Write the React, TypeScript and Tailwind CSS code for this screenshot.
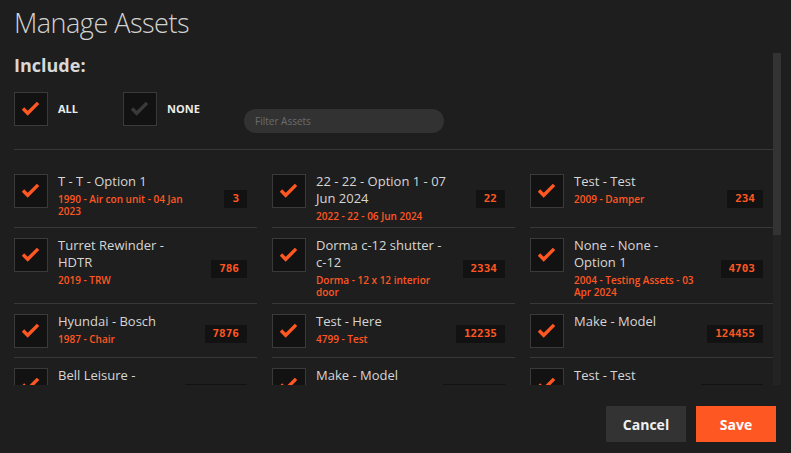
type Asset = {
  title: string;
  detail?: string;
  count: string;
};

const assets: Asset[] = [
  { title: "T - T - Option 1", detail: "1990 - Air con unit - 04 Jan 2023", count: "3" },
  { title: "22 - 22 - Option 1 - 07 Jun 2024", detail: "2022 - 22 - 06 Jun 2024", count: "22" },
  { title: "Test - Test", detail: "2009 - Damper", count: "234" },
  { title: "Turret Rewinder - HDTR", detail: "2019 - TRW", count: "786" },
  { title: "Dorma c-12 shutter - c-12", detail: "Dorma - 12 x 12 interior door", count: "2334" },
  { title: "None - None - Option 1", detail: "2004 - Testing Assets - 03 Apr 2024", count: "4703" },
  { title: "Hyundai - Bosch", detail: "1987 - Chair", count: "7876" },
  { title: "Test - Here", detail: "4799 - Test", count: "12235" },
  { title: "Make - Model", count: "124455" },
  { title: "Bell Leisure - Lounge Chair", detail: "2015 - Seating", count: "1455545" },
  { title: "Make - Model", detail: "2001 - Model", count: "1244556" },
  { title: "Test - Test", detail: "2010 - Test", count: "2475496" },
];

function CheckBox({ on = true }: { on?: boolean }) {
  return (
    <div className="flex h-[34px] w-[34px] shrink-0 items-center justify-center border border-[#3a3a3a] bg-[#121212]">
      <svg width="34" height="34" viewBox="0 0 34 34" fill="none">
        <polyline
          points="8.5,16.5 13.5,21.5 24.5,10.5"
          stroke={on ? "#ff5722" : "#3a3a3a"}
          strokeWidth="3.6"
          strokeLinecap="butt"
          strokeLinejoin="miter"
        />
      </svg>
    </div>
  );
}

function AssetCard({ asset }: { asset: Asset }) {
  return (
    <div className="flex items-start border-b border-[#383838] pt-[10px] pb-[4px] pr-[10px]">
      <div className="mb-[5px]">
        <CheckBox />
      </div>
      <div className="mr-[20px] ml-[10px] min-w-0 flex-1 -translate-y-px">
        <div className="text-[13px] leading-[17px] text-[#d6d6d6]">{asset.title}</div>
        {asset.detail && (
          <div className="mt-[3px] text-[10px] font-semibold leading-[12px] text-[#ff5722]">
            {asset.detail}
          </div>
        )}
      </div>
      <span className="shrink-0 self-center bg-[#121212] px-[8px] font-['DejaVu_Sans_Mono',monospace] text-[11px] leading-[18px] font-bold text-[#ff5722]">
        {asset.count}
      </span>
    </div>
  );
}

export default function App() {
  return (
    <div className="flex h-[453px] w-[791px] flex-col overflow-hidden bg-[#1e1e1e] font-['Open_Sans',sans-serif]">
      <h1 className="h-[53px] pt-[4px] pl-[14px] text-[27px] leading-[38px] font-light tracking-[-0.5px] text-[#d2d2d2]">
        Manage Assets
      </h1>

      <div className="flex h-[332px]">
        <div className="flex-1 overflow-hidden pl-[14px]">
          <h2 className="text-[18px] leading-[24px] font-bold text-[#d8d8d8]">Include:</h2>

          <div className="mt-[15px] flex items-start">
            <label className="flex items-center">
              <CheckBox />
              <span className="ml-[10px] w-[65px] text-[11px] font-bold text-[#ececec]">ALL</span>
            </label>
            <label className="flex items-center">
              <CheckBox on={false} />
              <span className="ml-[10px] w-[77px] text-[11px] font-bold text-[#ececec]">NONE</span>
            </label>
            <input
              placeholder="Filter Assets"
              className="mt-[17px] h-[24px] w-[200px] rounded-full bg-[#323232] px-[11px] text-[10px] text-[#ccc] outline-none placeholder:text-[#6c6c6c]"
            />
          </div>

          <div className="mt-[16px] h-px bg-[#383838]" />

          <div className="mt-[14px] grid grid-cols-3 gap-x-[15px]">
            {assets.map((a, i) => (
              <AssetCard key={i} asset={a} />
            ))}
          </div>
        </div>

        {/* scroll track */}
        <div className="mr-[10px] w-[8px] bg-[#232323]">
          <div className="h-[182px] bg-[#333333]" />
        </div>
      </div>

      <div className="flex justify-end gap-[10px] pt-[21px] pr-[15px]">
        <button className="h-[36px] w-[80px] bg-[#333333] text-[14px] font-bold text-[#f0f0f0]">
          Cancel
        </button>
        <button className="h-[36px] w-[80px] bg-[#ff5722] text-[14px] font-bold text-white">
          Save
        </button>
      </div>
    </div>
  );
}
